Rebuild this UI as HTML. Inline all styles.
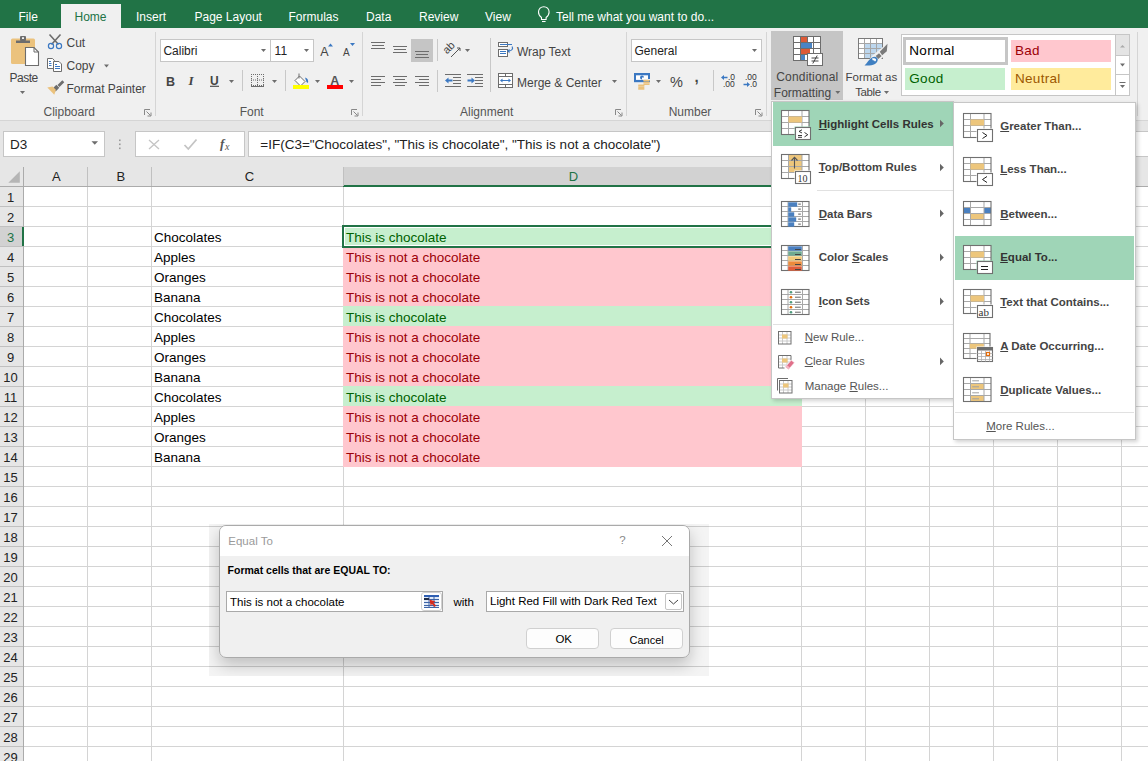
<!DOCTYPE html>
<html><head><meta charset="utf-8"><style>
html,body{margin:0;padding:0;}
body{width:1148px;height:761px;overflow:hidden;position:relative;background:#fff;font-family:"Liberation Sans",sans-serif;}
.t{position:absolute;white-space:nowrap;}
.r{position:absolute;}
</style></head><body>
<div class="r" style="left:0px;top:0px;width:1148px;height:28px;background:#217346;"></div>
<div class="r" style="left:61px;top:4px;width:60px;height:24px;background:#f0f0f0;"></div>
<div class="t" style="left:18.5px;top:10.84px;font-size:12px;line-height:12px;color:#fff;font-weight:normal;font-family:'Liberation Sans',sans-serif;">File</div>
<div class="t" style="left:74.5px;top:10.84px;font-size:12px;line-height:12px;color:#217346;font-weight:normal;font-family:'Liberation Sans',sans-serif;">Home</div>
<div class="t" style="left:136px;top:10.84px;font-size:12px;line-height:12px;color:#fff;font-weight:normal;font-family:'Liberation Sans',sans-serif;">Insert</div>
<div class="t" style="left:194.5px;top:10.84px;font-size:12px;line-height:12px;color:#fff;font-weight:normal;font-family:'Liberation Sans',sans-serif;">Page Layout</div>
<div class="t" style="left:288.5px;top:10.84px;font-size:12px;line-height:12px;color:#fff;font-weight:normal;font-family:'Liberation Sans',sans-serif;">Formulas</div>
<div class="t" style="left:366px;top:10.84px;font-size:12px;line-height:12px;color:#fff;font-weight:normal;font-family:'Liberation Sans',sans-serif;">Data</div>
<div class="t" style="left:419px;top:10.84px;font-size:12px;line-height:12px;color:#fff;font-weight:normal;font-family:'Liberation Sans',sans-serif;">Review</div>
<div class="t" style="left:485px;top:10.84px;font-size:12px;line-height:12px;color:#fff;font-weight:normal;font-family:'Liberation Sans',sans-serif;">View</div>
<div class="t" style="left:556px;top:10.84px;font-size:12px;line-height:12px;color:#fff;font-weight:normal;font-family:'Liberation Sans',sans-serif;">Tell me what you want to do...</div>
<div class="r" style="left:0px;top:28px;width:1148px;height:92px;background:#f0f0f0;"></div>
<div class="r" style="left:0px;top:120px;width:1148px;height:1px;background:#d5d5d5;"></div>
<div class="r" style="left:0px;top:121px;width:1148px;height:46px;background:#e6e6e6;"></div>
<div class="r" style="left:771px;top:31px;width:72px;height:69px;background:#c5c5c5;"></div>
<div class="t" style="left:9.5px;top:71.54px;font-size:12px;line-height:12px;color:#444;font-weight:normal;font-family:'Liberation Sans',sans-serif;letter-spacing:-0.5px">Paste</div>
<div class="t" style="left:66.5px;top:37.34px;font-size:12px;line-height:12px;color:#444;font-weight:normal;font-family:'Liberation Sans',sans-serif;">Cut</div>
<div class="t" style="left:66.5px;top:60.04px;font-size:12px;line-height:12px;color:#444;font-weight:normal;font-family:'Liberation Sans',sans-serif;">Copy</div>
<div class="t" style="left:66.5px;top:83.34px;font-size:12px;line-height:12px;color:#444;font-weight:normal;font-family:'Liberation Sans',sans-serif;">Format Painter</div>
<div class="t" style="left:43.5px;top:106.04px;font-size:12px;line-height:12px;color:#555;font-weight:normal;font-family:'Liberation Sans',sans-serif;">Clipboard</div>
<div class="t" style="left:239.7px;top:106.34px;font-size:12px;line-height:12px;color:#555;font-weight:normal;font-family:'Liberation Sans',sans-serif;">Font</div>
<div class="t" style="left:460px;top:106.14px;font-size:12px;line-height:12px;color:#555;font-weight:normal;font-family:'Liberation Sans',sans-serif;">Alignment</div>
<div class="t" style="left:668.7px;top:106.34px;font-size:12px;line-height:12px;color:#555;font-weight:normal;font-family:'Liberation Sans',sans-serif;">Number</div>
<div class="t" style="left:517px;top:45.54px;font-size:12px;line-height:12px;color:#444;font-weight:normal;font-family:'Liberation Sans',sans-serif;">Wrap Text</div>
<div class="t" style="left:517px;top:76.54px;font-size:12px;line-height:12px;color:#444;font-weight:normal;font-family:'Liberation Sans',sans-serif;">Merge &amp; Center</div>
<div class="t" style="left:776.2px;top:71.24px;font-size:12px;line-height:12px;color:#444;font-weight:normal;font-family:'Liberation Sans',sans-serif;letter-spacing:0.2px">Conditional</div>
<div class="t" style="left:773.8px;top:86.84px;font-size:12px;line-height:12px;color:#444;font-weight:normal;font-family:'Liberation Sans',sans-serif;">Formatting</div>
<div class="t" style="left:845.5px;top:71.67px;font-size:11.5px;line-height:11.5px;color:#444;font-weight:normal;font-family:'Liberation Sans',sans-serif;">Format as</div>
<div class="t" style="left:855.2px;top:87.27px;font-size:11.5px;line-height:11.5px;color:#444;font-weight:normal;font-family:'Liberation Sans',sans-serif;letter-spacing:-0.4px">Table</div>
<div class="r" style="left:155px;top:32px;width:1px;height:84px;background:#d5d5d5;"></div>
<div class="r" style="left:362px;top:32px;width:1px;height:84px;background:#d5d5d5;"></div>
<div class="r" style="left:626px;top:32px;width:1px;height:84px;background:#d5d5d5;"></div>
<div class="r" style="left:766px;top:32px;width:1px;height:84px;background:#d5d5d5;"></div>
<div class="r" style="left:1137px;top:32px;width:1px;height:84px;background:#d5d5d5;"></div>
<div class="r" style="left:160px;top:39px;width:111px;height:23px;background:#fff;border:1px solid #c6c6c6;box-sizing:border-box"></div>
<div class="r" style="left:270px;top:39px;width:44px;height:23px;background:#fff;border:1px solid #c6c6c6;box-sizing:border-box"></div>
<div class="t" style="left:163.4px;top:44.64px;font-size:12px;line-height:12px;color:#222;font-weight:normal;font-family:'Liberation Sans',sans-serif;">Calibri</div>
<div class="t" style="left:274.6px;top:44.64px;font-size:12px;line-height:12px;color:#222;font-weight:normal;font-family:'Liberation Sans',sans-serif;">11</div>
<div class="r" style="left:631px;top:39px;width:131px;height:23px;background:#fff;border:1px solid #c6c6c6;box-sizing:border-box"></div>
<div class="t" style="left:634.5px;top:44.64px;font-size:12px;line-height:12px;color:#222;font-weight:normal;font-family:'Liberation Sans',sans-serif;">General</div>
<div class="r" style="left:901px;top:34px;width:229px;height:62px;background:#fff;border:1px solid #c6c6c6;box-sizing:border-box"></div>
<div class="r" style="left:903px;top:37px;width:105px;height:28px;background:#fff;border:3px solid #c6c6c6;box-sizing:border-box"></div>
<div class="r" style="left:1011px;top:40px;width:100px;height:22px;background:#ffc7ce;"></div>
<div class="r" style="left:905px;top:68px;width:100px;height:22px;background:#c6efce;"></div>
<div class="r" style="left:1011px;top:68px;width:100px;height:22px;background:#ffeb9c;"></div>
<div class="t" style="left:909.3px;top:44.17px;font-size:13.5px;line-height:13.5px;color:#000;font-weight:normal;font-family:'Liberation Sans',sans-serif;letter-spacing:0.3px">Normal</div>
<div class="t" style="left:1015px;top:44.17px;font-size:13.5px;line-height:13.5px;color:#9c0006;font-weight:normal;font-family:'Liberation Sans',sans-serif;letter-spacing:0.3px">Bad</div>
<div class="t" style="left:909.3px;top:71.97px;font-size:13.5px;line-height:13.5px;color:#006100;font-weight:normal;font-family:'Liberation Sans',sans-serif;letter-spacing:0.3px">Good</div>
<div class="t" style="left:1015px;top:71.97px;font-size:13.5px;line-height:13.5px;color:#9c5700;font-weight:normal;font-family:'Liberation Sans',sans-serif;letter-spacing:0.3px">Neutral</div>
<div class="r" style="left:1115px;top:34px;width:15px;height:62px;background:#fff;border:1px solid #c6c6c6;box-sizing:border-box"></div>
<div class="r" style="left:1116px;top:35px;width:13px;height:20px;background:#e4e4e4;"></div>
<div class="r" style="left:1116px;top:55px;width:13px;height:1px;background:#c6c6c6;"></div>
<div class="r" style="left:1116px;top:74px;width:13px;height:1px;background:#c6c6c6;"></div>
<svg class="r" style="left:0;top:0" width="1148" height="120" viewBox="0 0 1148 120"><rect x="11" y="38.5" width="24" height="25.5" rx="1.5" fill="#ebc27d"/><path d="M16 40.5h14v2.5h-14z" fill="#6d6d6d"/><rect x="20" y="36" width="6" height="5" rx="1" fill="#6d6d6d"/><rect x="22" y="37.3" width="2" height="1.6" fill="#fff"/><path d="M25.5 47.5h8.5l4.5 4.5v13.5h-13z" fill="#fff" stroke="#6d6d6d" stroke-width="1.1"/><path d="M34 47.5v4.5h4.5" fill="none" stroke="#6d6d6d" stroke-width="1"/><path d="M20.0 91.0h5l-2.5 3z" fill="#6d6d6d"/><path d="M49.5 34.5l9 10M60.5 34.5l-9 10" stroke="#6d6d6d" stroke-width="1.6"/><circle cx="51" cy="46" r="2.6" fill="none" stroke="#3b78c2" stroke-width="1.2"/><circle cx="59" cy="46" r="2.6" fill="none" stroke="#3b78c2" stroke-width="1.2"/><path d="M47.5 58.5h5l1.8 1.8v8.2h-6.8z" fill="#fff" stroke="#6d6d6d" stroke-width="1"/><path d="M49 61.5h2M49 63.5h2.5M49 65.5h2.5" stroke="#3b78c2" stroke-width="1"/><path d="M53.5 61.5h5.5l2.5 2.5v7.5h-8z" fill="#fff" stroke="#6d6d6d" stroke-width="1"/><path d="M55 64.5h2M55 66.5h5M55 68.5h5" stroke="#3b78c2" stroke-width="1"/><path d="M104.0 64.5h5l-2.5 3z" fill="#6d6d6d"/><path d="M62.3 82.3l-2.8 2.8" stroke="#6d6d6d" stroke-width="2.8" stroke-linecap="square"/><path d="M57.8 86.3l-3.6 3.6" stroke="#6d6d6d" stroke-width="4.2"/><path d="M47.3 87.6l5.2-1.2 3.4 3.4-1.6 4.9z" fill="#ebc27d"/><path d="M144.5 115v-5.5h5.5" fill="none" stroke="#888" stroke-width="1"/><path d="M146.5 111.5l4 4M151 112.5v3.5h-3.5" fill="none" stroke="#888" stroke-width="1"/><path d="M351.5 115v-5.5h5.5" fill="none" stroke="#888" stroke-width="1"/><path d="M353.5 111.5l4 4M358 112.5v3.5h-3.5" fill="none" stroke="#888" stroke-width="1"/><path d="M615.5 115v-5.5h5.5" fill="none" stroke="#888" stroke-width="1"/><path d="M617.5 111.5l4 4M622 112.5v3.5h-3.5" fill="none" stroke="#888" stroke-width="1"/><path d="M755.5 115v-5.5h5.5" fill="none" stroke="#888" stroke-width="1"/><path d="M757.5 111.5l4 4M762 112.5v3.5h-3.5" fill="none" stroke="#888" stroke-width="1"/><path d="M261.0 49.0h5l-2.5 3z" fill="#6d6d6d"/><path d="M304.0 49.0h5l-2.5 3z" fill="#6d6d6d"/><text x="320.3" y="56" font-family="Liberation Sans" font-size="12.5" fill="#444">A</text><path d="M328 46.5l2.5-3 2.5 3z" fill="#3b78c2"/><text x="343" y="56" font-family="Liberation Sans" font-size="10" fill="#444">A</text><path d="M350 43h5l-2.5 3z" fill="#3b78c2"/><text x="166" y="85.5" font-family="Liberation Sans" font-weight="bold" font-size="12.5" fill="#444">B</text><text x="188.5" y="85.3" font-family="Liberation Serif" font-style="italic" font-weight="bold" font-size="13" fill="#444">I</text><text x="210" y="84.5" font-family="Liberation Sans" font-weight="bold" font-size="12" fill="#444">U</text><path d="M210 86.3h9" stroke="#444" stroke-width="1.1"/><path d="M229.0 80.0h5l-2.5 3z" fill="#6d6d6d"/><rect x="242" y="70" width="1" height="21" fill="#c8c8c8"/><rect x="285" y="70" width="1" height="21" fill="#c8c8c8"/><rect x="251" y="74" width="1" height="1" fill="#6d6d6d"/><rect x="253" y="74" width="1" height="1" fill="#6d6d6d"/><rect x="255" y="74" width="1" height="1" fill="#6d6d6d"/><rect x="257" y="74" width="1" height="1" fill="#6d6d6d"/><rect x="259" y="74" width="1" height="1" fill="#6d6d6d"/><rect x="261" y="74" width="1" height="1" fill="#6d6d6d"/><rect x="263" y="74" width="1" height="1" fill="#6d6d6d"/><rect x="251" y="79.5" width="1" height="1" fill="#6d6d6d"/><rect x="253" y="79.5" width="1" height="1" fill="#6d6d6d"/><rect x="255" y="79.5" width="1" height="1" fill="#6d6d6d"/><rect x="257" y="79.5" width="1" height="1" fill="#6d6d6d"/><rect x="259" y="79.5" width="1" height="1" fill="#6d6d6d"/><rect x="261" y="79.5" width="1" height="1" fill="#6d6d6d"/><rect x="263" y="79.5" width="1" height="1" fill="#6d6d6d"/><rect x="251" y="85" width="1" height="1" fill="#6d6d6d"/><rect x="253" y="85" width="1" height="1" fill="#6d6d6d"/><rect x="255" y="85" width="1" height="1" fill="#6d6d6d"/><rect x="257" y="85" width="1" height="1" fill="#6d6d6d"/><rect x="259" y="85" width="1" height="1" fill="#6d6d6d"/><rect x="261" y="85" width="1" height="1" fill="#6d6d6d"/><rect x="263" y="85" width="1" height="1" fill="#6d6d6d"/><rect x="251" y="74" width="1" height="1" fill="#6d6d6d"/><rect x="251" y="76" width="1" height="1" fill="#6d6d6d"/><rect x="251" y="78" width="1" height="1" fill="#6d6d6d"/><rect x="251" y="80" width="1" height="1" fill="#6d6d6d"/><rect x="251" y="82" width="1" height="1" fill="#6d6d6d"/><rect x="251" y="84" width="1" height="1" fill="#6d6d6d"/><rect x="257" y="74" width="1" height="1" fill="#6d6d6d"/><rect x="257" y="76" width="1" height="1" fill="#6d6d6d"/><rect x="257" y="78" width="1" height="1" fill="#6d6d6d"/><rect x="257" y="80" width="1" height="1" fill="#6d6d6d"/><rect x="257" y="82" width="1" height="1" fill="#6d6d6d"/><rect x="257" y="84" width="1" height="1" fill="#6d6d6d"/><rect x="263" y="74" width="1" height="1" fill="#6d6d6d"/><rect x="263" y="76" width="1" height="1" fill="#6d6d6d"/><rect x="263" y="78" width="1" height="1" fill="#6d6d6d"/><rect x="263" y="80" width="1" height="1" fill="#6d6d6d"/><rect x="263" y="82" width="1" height="1" fill="#6d6d6d"/><rect x="263" y="84" width="1" height="1" fill="#6d6d6d"/><rect x="251" y="86" width="13" height="1" fill="#6d6d6d"/><path d="M272.0 80.0h5l-2.5 3z" fill="#6d6d6d"/><path d="M299.5 76l5.5 5.5-4.5 4.5-5.5-5.5z" fill="#fff" stroke="#6d6d6d" stroke-width="1"/><path d="M299 73.5v5" stroke="#6d6d6d" stroke-width="1"/><path d="M305 77.5c2.5 .5 3.5 2.5 3 5.5l-1.5-1z" fill="#3b78c2"/><rect x="293" y="85" width="16" height="4" fill="#ffff00"/><path d="M315.0 80.0h5l-2.5 3z" fill="#6d6d6d"/><text x="330.3" y="84.8" font-family="Liberation Sans" font-weight="bold" font-size="12.5" fill="#555">A</text><rect x="327" y="85" width="16" height="4" fill="#ff0000"/><path d="M349.0 80.0h5l-2.5 3z" fill="#6d6d6d"/><rect x="371" y="42" width="14" height="1" fill="#6d6d6d"/><rect x="372" y="45" width="12" height="1" fill="#6d6d6d"/><rect x="371" y="48" width="14" height="1" fill="#6d6d6d"/><rect x="393" y="46" width="14" height="1" fill="#6d6d6d"/><rect x="394" y="49" width="12" height="1" fill="#6d6d6d"/><rect x="393" y="52" width="14" height="1" fill="#6d6d6d"/><rect x="411" y="39" width="22" height="23" fill="#c5c5c5"/><rect x="415" y="51" width="14" height="1" fill="#6d6d6d"/><rect x="416" y="54" width="12" height="1" fill="#6d6d6d"/><rect x="415" y="57" width="14" height="1" fill="#6d6d6d"/><rect x="437" y="39" width="1" height="22" fill="#c8c8c8"/><rect x="437" y="70" width="1" height="22" fill="#c8c8c8"/><rect x="490" y="38" width="1" height="54" fill="#c8c8c8"/><rect x="371" y="76" width="14" height="1" fill="#6d6d6d"/><rect x="393" y="76" width="14" height="1" fill="#6d6d6d"/><rect x="415" y="76" width="14" height="1" fill="#6d6d6d"/><rect x="371" y="79" width="10" height="1" fill="#6d6d6d"/><rect x="395" y="79" width="10" height="1" fill="#6d6d6d"/><rect x="419" y="79" width="10" height="1" fill="#6d6d6d"/><rect x="371" y="82" width="14" height="1" fill="#6d6d6d"/><rect x="393" y="82" width="14" height="1" fill="#6d6d6d"/><rect x="415" y="82" width="14" height="1" fill="#6d6d6d"/><rect x="371" y="85" width="10" height="1" fill="#6d6d6d"/><rect x="395" y="85" width="10" height="1" fill="#6d6d6d"/><rect x="419" y="85" width="10" height="1" fill="#6d6d6d"/><text x="0" y="0" transform="translate(447 54.5) rotate(-45)" font-family="Liberation Sans" font-size="11" fill="#444">ab</text><path d="M451 57l9-9M457 48h3v3" stroke="#555" stroke-width="1" fill="none"/><path d="M465.0 49.0h5l-2.5 3z" fill="#6d6d6d"/><rect x="445" y="74" width="16" height="1" fill="#6d6d6d"/><rect x="445" y="86" width="16" height="1" fill="#6d6d6d"/><rect x="453" y="77" width="8" height="1" fill="#6d6d6d"/><rect x="453" y="80" width="8" height="1" fill="#6d6d6d"/><rect x="453" y="83" width="8" height="1" fill="#6d6d6d"/><path d="M445 80.5l3.5-3v2h4v2h-4v2z" fill="#3b78c2"/><rect x="467" y="74" width="16" height="1" fill="#6d6d6d"/><rect x="467" y="86" width="16" height="1" fill="#6d6d6d"/><rect x="475" y="77" width="8" height="1" fill="#6d6d6d"/><rect x="475" y="80" width="8" height="1" fill="#6d6d6d"/><rect x="475" y="83" width="8" height="1" fill="#6d6d6d"/><path d="M475 80.5l-3.5-3v2h-4v2h4v2z" fill="#3b78c2"/><rect x="498.5" y="42.5" width="9" height="4" fill="#fff" stroke="#6d6d6d" stroke-width="1"/><path d="M500 44.5h12" stroke="#3b78c2" stroke-width="1"/><rect x="498.5" y="49.5" width="9" height="7" fill="#fff" stroke="#6d6d6d" stroke-width="1"/><path d="M500 51.5h6M500 53.5h6" stroke="#3b78c2" stroke-width="1"/><path d="M512 46.5c1.5 2 0 4.5-3.5 4.5" stroke="#3b78c2" stroke-width="1.2" fill="none"/><path d="M507 51l2.5-2.3v4.6z" fill="#3b78c2"/><rect x="498.5" y="73.5" width="14" height="14" fill="#fff" stroke="#6d6d6d" stroke-width="1"/><path d="M498.5 76.5h14M498.5 84.5h14M505.5 73.5v3M505.5 84.5v3" stroke="#6d6d6d" stroke-width="1"/><path d="M501 80.5h9" stroke="#3b78c2" stroke-width="1"/><path d="M500 80.5l2.5-2v4zM511 80.5l-2.5-2v4z" fill="#3b78c2"/><path d="M612.0 80.0h5l-2.5 3z" fill="#6d6d6d"/><path d="M752.0 49.0h5l-2.5 3z" fill="#6d6d6d"/><rect x="634" y="73" width="16" height="9.2" fill="#3b78c2"/><path d="M636 75.3h12v4.6h-12z" fill="#fff"/><circle cx="642" cy="77.6" r="2" fill="#3b78c2"/><path d="M642 77.6h2v2h-2z" fill="#fff"/><path d="M643.5 79.5h6.5" stroke="#f0f0f0" stroke-width="1"/><rect x="643.2" y="79.7" width="6.6" height="1.6" rx="0.8" fill="#ebc27d"/><rect x="643.2" y="81.5" width="6.6" height="1.6" rx="0.8" fill="#ebc27d"/><rect x="643.2" y="83.3" width="6.6" height="1.6" rx="0.8" fill="#ebc27d"/><rect x="638.0" y="84.5" width="6.6" height="1.6" rx="0.8" fill="#ebc27d"/><rect x="638.0" y="86.3" width="6.6" height="1.6" rx="0.8" fill="#ebc27d"/><rect x="638.0" y="88.10000000000001" width="6.6" height="1.6" rx="0.8" fill="#ebc27d"/><path d="M656.0 80.0h5l-2.5 3z" fill="#6d6d6d"/><text x="670" y="86.8" font-family="Liberation Sans" font-size="14.5" fill="#444">%</text><text x="694.5" y="82" font-family="Liberation Sans" font-weight="bold" font-size="15" fill="#444">,</text><rect x="713" y="70" width="1" height="21" fill="#c8c8c8"/><text x="728" y="80" font-family="Liberation Sans" font-size="8.5" fill="#333">.0</text><text x="723" y="87" font-family="Liberation Sans" font-size="8.5" fill="#333">.00</text><path d="M721 77.5l3-2.5v1.8h3.5v1.5h-3.5v1.8z" fill="#3b78c2"/><text x="745" y="80" font-family="Liberation Sans" font-size="8.5" fill="#333">.00</text><text x="750" y="87" font-family="Liberation Sans" font-size="8.5" fill="#333">.0</text><path d="M750 84.5l-3-2.5v1.8h-3.5v1.5h3.5v1.8z" fill="#3b78c2"/><rect x="793" y="36" width="28" height="25" fill="#6d6d6d"/><rect x="794" y="37" width="6" height="5" fill="#fff"/><rect x="794" y="43" width="6" height="5" fill="#fff"/><rect x="794" y="49" width="6" height="5" fill="#fff"/><rect x="794" y="55" width="6" height="5" fill="#fff"/><rect x="801" y="37" width="6" height="5" fill="#fff"/><rect x="801" y="43" width="6" height="5" fill="#fff"/><rect x="801" y="49" width="6" height="5" fill="#fff"/><rect x="801" y="55" width="6" height="5" fill="#fff"/><rect x="808" y="37" width="5" height="5" fill="#fff"/><rect x="808" y="43" width="5" height="5" fill="#fff"/><rect x="808" y="49" width="5" height="5" fill="#fff"/><rect x="808" y="55" width="5" height="5" fill="#fff"/><rect x="814" y="37" width="6" height="5" fill="#fff"/><rect x="814" y="43" width="6" height="5" fill="#fff"/><rect x="814" y="49" width="6" height="5" fill="#fff"/><rect x="814" y="55" width="6" height="5" fill="#fff"/><rect x="801" y="37" width="6" height="5" fill="#dd5a37"/><rect x="801" y="43" width="11" height="5" fill="#4a84c4"/><rect x="801" y="49" width="9" height="5" fill="#dd5a37"/><rect x="801" y="55" width="4" height="5" fill="#4a84c4"/><rect x="807.5" y="53.5" width="15" height="12" fill="#fff" stroke="#6d6d6d" stroke-width="1"/><path d="M811.5 58h7M811.5 61h7M817.2 55.5l-4.4 8" stroke="#333" stroke-width="0.9"/><rect x="858" y="38" width="25" height="21" fill="#f0f0f0"/><rect x="858.5" y="38.5" width="6" height="5" fill="#fff"/><rect x="858.5" y="43.5" width="6" height="5" fill="#fff"/><rect x="858.5" y="48.5" width="6" height="5" fill="#fff"/><rect x="858.5" y="53.5" width="6" height="5" fill="#fff"/><rect x="864.5" y="38.5" width="6" height="5" fill="#fff"/><rect x="864.5" y="43.5" width="6" height="5" fill="#bdd7ee"/><rect x="864.5" y="48.5" width="6" height="5" fill="#bdd7ee"/><rect x="864.5" y="53.5" width="6" height="5" fill="#bdd7ee"/><rect x="870.5" y="38.5" width="6" height="5" fill="#fff"/><rect x="870.5" y="43.5" width="6" height="5" fill="#bdd7ee"/><rect x="870.5" y="48.5" width="6" height="5" fill="#bdd7ee"/><rect x="870.5" y="53.5" width="6" height="5" fill="#bdd7ee"/><rect x="876.5" y="38.5" width="6" height="5" fill="#fff"/><rect x="876.5" y="43.5" width="6" height="5" fill="#bdd7ee"/><rect x="876.5" y="48.5" width="6" height="5" fill="#bdd7ee"/><rect x="876.5" y="53.5" width="6" height="5" fill="#bdd7ee"/><path d="M864.5 38.5v20M870.5 38.5v20M876.5 38.5v20M858.5 43.5h24M858.5 48.5h24M858.5 53.5h24" stroke="#a6a6a6" stroke-width="1"/><rect x="858.5" y="38.5" width="24" height="20" fill="none" stroke="#7a7a7a" stroke-width="1"/><path d="M889 42l-.5 10-8 7.5-12 8-4-2 8-10z" fill="#f0f0f0"/><path d="M887.5 43.7l-.7 7.5-4.6 4-2.4-3.4z" fill="#7a7a7a"/><path d="M879 53.2l2.6 2.7-3.3 3-2.6-2.9z" fill="#7a7a7a"/><path d="M864.5 65.6c2.5-3 5-6.5 7.5-8.2 2.5-1.6 5.8-.5 5.8 2.2 0 2.5-2 4.4-4.6 5.2-2.2.7-5.5.8-8.7.8z" fill="#3f7fc1"/><path d="M872 58.6c1.3-.6 3.2-.4 3.9.6.5.9-.3 2.3-1 2.3-.5-1-1.4-1.2-2.2-1.2z" fill="#fff"/><path d="M541.5 17.5c-2-1.5-3-3.3-3-5.5 0-3 2.4-5.3 5.3-5.3s5.3 2.3 5.3 5.3c0 2.2-1 4-3 5.5v2h-4.6z" fill="none" stroke="#fff" stroke-width="1.1"/><path d="M542 21.5h3.6" stroke="#fff" stroke-width="1.1"/><path d="M835.3 91.0h5l-2.5 3z" fill="#6d6d6d"/><path d="M884.0 91.0h5l-2.5 3z" fill="#6d6d6d"/><path d="M1120 47.5l2.5-2.5 2.5 2.5z" fill="#aaa"/><path d="M1120.0 63.5h5l-2.5 3z" fill="#6d6d6d"/><path d="M1119.5 82.5h6" stroke="#6d6d6d" stroke-width="1"/><path d="M1120.0 85.0h5l-2.5 3z" fill="#6d6d6d"/></svg>
<div class="r" style="left:3px;top:131px;width:102px;height:26px;background:#fff;border:1px solid #c6c6c6;box-sizing:border-box"></div>
<div class="t" style="left:10px;top:137.57px;font-size:13.5px;line-height:13.5px;color:#222;font-weight:normal;font-family:'Liberation Sans',sans-serif;">D3</div>
<div class="r" style="left:135px;top:131px;width:110px;height:26px;background:#fff;border:1px solid #c6c6c6;box-sizing:border-box"></div>
<div class="r" style="left:248px;top:131px;width:910px;height:26px;background:#fff;border:1px solid #c6c6c6;box-sizing:border-box"></div>
<svg class="r" style="left:0;top:120px" width="260" height="67" viewBox="0 120 260 67"><path d="M91.5 141.3h6.5l-3.25 3.4z" fill="#6d6d6d"/><rect x="119" y="139.5" width="1.6" height="1.6" fill="#9a9a9a"/><rect x="119" y="143.5" width="1.6" height="1.6" fill="#9a9a9a"/><rect x="119" y="147.5" width="1.6" height="1.6" fill="#9a9a9a"/><path d="M149 140l10 9M159 140l-10 9" stroke="#c4c4c4" stroke-width="1.3"/><path d="M184.5 145l3.8 4 8.2-9.5" stroke="#c4c4c4" stroke-width="1.8" fill="none"/><text x="220" y="148" font-family="Liberation Serif" font-style="italic" font-weight="bold" font-size="13" fill="#555">f</text><text x="225" y="149.5" font-family="Liberation Serif" font-style="italic" font-size="10" fill="#555">x</text></svg>
<div class="t" style="left:260.3px;top:137.57px;font-size:13.5px;line-height:13.5px;color:#222;font-weight:normal;font-family:'Liberation Sans',sans-serif;">=IF(C3="Chocolates", "This is chocolate", "This is not a chocolate")</div>
<div class="r" style="left:0px;top:167px;width:1148px;height:20px;background:#e6e6e6;"></div>
<div class="r" style="left:343px;top:167px;width:459px;height:18px;background:#d2d2d2;"></div>
<div class="r" style="left:343px;top:185px;width:459px;height:2px;background:#217346;"></div>
<div class="r" style="left:0px;top:186px;width:343px;height:1px;background:#ababab;"></div>
<div class="r" style="left:802px;top:186px;width:346px;height:1px;background:#ababab;"></div>
<div class="r" style="left:24px;top:187px;width:1124px;height:574px;background:#fff;"></div>
<div class="r" style="left:0px;top:187px;width:23px;height:574px;background:#e6e6e6;"></div>
<div class="r" style="left:0px;top:227px;width:23px;height:19px;background:#d2d2d2;"></div>
<div class="r" style="left:23px;top:167px;width:1px;height:594px;background:#ababab;"></div>
<div class="r" style="left:24px;top:206px;width:1124px;height:1px;background:#d4d4d4;"></div>
<div class="r" style="left:0px;top:206px;width:23px;height:1px;background:#c0c0c0;"></div>
<div class="r" style="left:24px;top:226px;width:1124px;height:1px;background:#d4d4d4;"></div>
<div class="r" style="left:0px;top:226px;width:23px;height:1px;background:#c0c0c0;"></div>
<div class="r" style="left:24px;top:246px;width:1124px;height:1px;background:#d4d4d4;"></div>
<div class="r" style="left:0px;top:246px;width:23px;height:1px;background:#c0c0c0;"></div>
<div class="r" style="left:24px;top:266px;width:1124px;height:1px;background:#d4d4d4;"></div>
<div class="r" style="left:0px;top:266px;width:23px;height:1px;background:#c0c0c0;"></div>
<div class="r" style="left:24px;top:286px;width:1124px;height:1px;background:#d4d4d4;"></div>
<div class="r" style="left:0px;top:286px;width:23px;height:1px;background:#c0c0c0;"></div>
<div class="r" style="left:24px;top:306px;width:1124px;height:1px;background:#d4d4d4;"></div>
<div class="r" style="left:0px;top:306px;width:23px;height:1px;background:#c0c0c0;"></div>
<div class="r" style="left:24px;top:326px;width:1124px;height:1px;background:#d4d4d4;"></div>
<div class="r" style="left:0px;top:326px;width:23px;height:1px;background:#c0c0c0;"></div>
<div class="r" style="left:24px;top:346px;width:1124px;height:1px;background:#d4d4d4;"></div>
<div class="r" style="left:0px;top:346px;width:23px;height:1px;background:#c0c0c0;"></div>
<div class="r" style="left:24px;top:366px;width:1124px;height:1px;background:#d4d4d4;"></div>
<div class="r" style="left:0px;top:366px;width:23px;height:1px;background:#c0c0c0;"></div>
<div class="r" style="left:24px;top:386px;width:1124px;height:1px;background:#d4d4d4;"></div>
<div class="r" style="left:0px;top:386px;width:23px;height:1px;background:#c0c0c0;"></div>
<div class="r" style="left:24px;top:406px;width:1124px;height:1px;background:#d4d4d4;"></div>
<div class="r" style="left:0px;top:406px;width:23px;height:1px;background:#c0c0c0;"></div>
<div class="r" style="left:24px;top:426px;width:1124px;height:1px;background:#d4d4d4;"></div>
<div class="r" style="left:0px;top:426px;width:23px;height:1px;background:#c0c0c0;"></div>
<div class="r" style="left:24px;top:446px;width:1124px;height:1px;background:#d4d4d4;"></div>
<div class="r" style="left:0px;top:446px;width:23px;height:1px;background:#c0c0c0;"></div>
<div class="r" style="left:24px;top:466px;width:1124px;height:1px;background:#d4d4d4;"></div>
<div class="r" style="left:0px;top:466px;width:23px;height:1px;background:#c0c0c0;"></div>
<div class="r" style="left:24px;top:486px;width:1124px;height:1px;background:#d4d4d4;"></div>
<div class="r" style="left:0px;top:486px;width:23px;height:1px;background:#c0c0c0;"></div>
<div class="r" style="left:24px;top:506px;width:1124px;height:1px;background:#d4d4d4;"></div>
<div class="r" style="left:0px;top:506px;width:23px;height:1px;background:#c0c0c0;"></div>
<div class="r" style="left:24px;top:526px;width:1124px;height:1px;background:#d4d4d4;"></div>
<div class="r" style="left:0px;top:526px;width:23px;height:1px;background:#c0c0c0;"></div>
<div class="r" style="left:24px;top:546px;width:1124px;height:1px;background:#d4d4d4;"></div>
<div class="r" style="left:0px;top:546px;width:23px;height:1px;background:#c0c0c0;"></div>
<div class="r" style="left:24px;top:566px;width:1124px;height:1px;background:#d4d4d4;"></div>
<div class="r" style="left:0px;top:566px;width:23px;height:1px;background:#c0c0c0;"></div>
<div class="r" style="left:24px;top:586px;width:1124px;height:1px;background:#d4d4d4;"></div>
<div class="r" style="left:0px;top:586px;width:23px;height:1px;background:#c0c0c0;"></div>
<div class="r" style="left:24px;top:606px;width:1124px;height:1px;background:#d4d4d4;"></div>
<div class="r" style="left:0px;top:606px;width:23px;height:1px;background:#c0c0c0;"></div>
<div class="r" style="left:24px;top:626px;width:1124px;height:1px;background:#d4d4d4;"></div>
<div class="r" style="left:0px;top:626px;width:23px;height:1px;background:#c0c0c0;"></div>
<div class="r" style="left:24px;top:646px;width:1124px;height:1px;background:#d4d4d4;"></div>
<div class="r" style="left:0px;top:646px;width:23px;height:1px;background:#c0c0c0;"></div>
<div class="r" style="left:24px;top:666px;width:1124px;height:1px;background:#d4d4d4;"></div>
<div class="r" style="left:0px;top:666px;width:23px;height:1px;background:#c0c0c0;"></div>
<div class="r" style="left:24px;top:686px;width:1124px;height:1px;background:#d4d4d4;"></div>
<div class="r" style="left:0px;top:686px;width:23px;height:1px;background:#c0c0c0;"></div>
<div class="r" style="left:24px;top:706px;width:1124px;height:1px;background:#d4d4d4;"></div>
<div class="r" style="left:0px;top:706px;width:23px;height:1px;background:#c0c0c0;"></div>
<div class="r" style="left:24px;top:726px;width:1124px;height:1px;background:#d4d4d4;"></div>
<div class="r" style="left:0px;top:726px;width:23px;height:1px;background:#c0c0c0;"></div>
<div class="r" style="left:24px;top:746px;width:1124px;height:1px;background:#d4d4d4;"></div>
<div class="r" style="left:0px;top:746px;width:23px;height:1px;background:#c0c0c0;"></div>
<div class="r" style="left:24px;top:766px;width:1124px;height:1px;background:#d4d4d4;"></div>
<div class="r" style="left:0px;top:766px;width:23px;height:1px;background:#c0c0c0;"></div>
<div class="r" style="left:87px;top:187px;width:1px;height:574px;background:#d4d4d4;"></div>
<div class="r" style="left:151px;top:187px;width:1px;height:574px;background:#d4d4d4;"></div>
<div class="r" style="left:343px;top:187px;width:1px;height:574px;background:#d4d4d4;"></div>
<div class="r" style="left:801px;top:187px;width:1px;height:574px;background:#d4d4d4;"></div>
<div class="r" style="left:865px;top:187px;width:1px;height:574px;background:#d4d4d4;"></div>
<div class="r" style="left:929px;top:187px;width:1px;height:574px;background:#d4d4d4;"></div>
<div class="r" style="left:993px;top:187px;width:1px;height:574px;background:#d4d4d4;"></div>
<div class="r" style="left:1057px;top:187px;width:1px;height:574px;background:#d4d4d4;"></div>
<div class="r" style="left:1121px;top:187px;width:1px;height:574px;background:#d4d4d4;"></div>
<div class="r" style="left:87px;top:167px;width:1px;height:19px;background:#c0c0c0;"></div>
<div class="r" style="left:151px;top:167px;width:1px;height:19px;background:#c0c0c0;"></div>
<div class="r" style="left:343px;top:167px;width:1px;height:19px;background:#c0c0c0;"></div>
<div class="r" style="left:801px;top:167px;width:1px;height:19px;background:#c0c0c0;"></div>
<div class="r" style="left:865px;top:167px;width:1px;height:19px;background:#c0c0c0;"></div>
<div class="r" style="left:929px;top:167px;width:1px;height:19px;background:#c0c0c0;"></div>
<div class="r" style="left:993px;top:167px;width:1px;height:19px;background:#c0c0c0;"></div>
<div class="r" style="left:1057px;top:167px;width:1px;height:19px;background:#c0c0c0;"></div>
<div class="r" style="left:1121px;top:167px;width:1px;height:19px;background:#c0c0c0;"></div>
<div class="r" style="left:343px;top:226px;width:459px;height:21px;background:#c6efce;"></div>
<div class="r" style="left:343px;top:246px;width:459px;height:21px;background:#ffc7ce;"></div>
<div class="r" style="left:343px;top:266px;width:459px;height:21px;background:#ffc7ce;"></div>
<div class="r" style="left:343px;top:286px;width:459px;height:21px;background:#ffc7ce;"></div>
<div class="r" style="left:343px;top:306px;width:459px;height:21px;background:#c6efce;"></div>
<div class="r" style="left:343px;top:326px;width:459px;height:21px;background:#ffc7ce;"></div>
<div class="r" style="left:343px;top:346px;width:459px;height:21px;background:#ffc7ce;"></div>
<div class="r" style="left:343px;top:366px;width:459px;height:21px;background:#ffc7ce;"></div>
<div class="r" style="left:343px;top:386px;width:459px;height:21px;background:#c6efce;"></div>
<div class="r" style="left:343px;top:406px;width:459px;height:21px;background:#ffc7ce;"></div>
<div class="r" style="left:343px;top:426px;width:459px;height:21px;background:#ffc7ce;"></div>
<div class="r" style="left:343px;top:446px;width:459px;height:21px;background:#ffc7ce;"></div>
<svg class="r" style="left:0;top:167px" width="23" height="19" viewBox="0 167 23 19"><path d="M8.3 182.7h11.5v-11.5z" fill="#b5b5b5"/></svg>
<div class="r" style="left:22px;top:227px;width:2px;height:19px;background:#217346;"></div>
<div class="t" style="left:52px;top:170.00px;font-size:13px;line-height:13px;color:#222;font-weight:normal;font-family:'Liberation Sans',sans-serif;">A</div>
<div class="t" style="left:116.5px;top:170.00px;font-size:13px;line-height:13px;color:#222;font-weight:normal;font-family:'Liberation Sans',sans-serif;">B</div>
<div class="t" style="left:244.7px;top:170.00px;font-size:13px;line-height:13px;color:#222;font-weight:normal;font-family:'Liberation Sans',sans-serif;">C</div>
<div class="t" style="left:568.7px;top:170.00px;font-size:13px;line-height:13px;color:#217346;font-weight:normal;font-family:'Liberation Sans',sans-serif;">D</div>
<div class="t" style="left:0px;top:190.50px;font-size:13px;line-height:13px;color:#222;font-weight:normal;font-family:'Liberation Sans',sans-serif;width:21px;text-align:center">1</div>
<div class="t" style="left:0px;top:210.50px;font-size:13px;line-height:13px;color:#222;font-weight:normal;font-family:'Liberation Sans',sans-serif;width:21px;text-align:center">2</div>
<div class="t" style="left:0px;top:230.50px;font-size:13px;line-height:13px;color:#217346;font-weight:normal;font-family:'Liberation Sans',sans-serif;width:21px;text-align:center">3</div>
<div class="t" style="left:0px;top:250.50px;font-size:13px;line-height:13px;color:#222;font-weight:normal;font-family:'Liberation Sans',sans-serif;width:21px;text-align:center">4</div>
<div class="t" style="left:0px;top:270.50px;font-size:13px;line-height:13px;color:#222;font-weight:normal;font-family:'Liberation Sans',sans-serif;width:21px;text-align:center">5</div>
<div class="t" style="left:0px;top:290.50px;font-size:13px;line-height:13px;color:#222;font-weight:normal;font-family:'Liberation Sans',sans-serif;width:21px;text-align:center">6</div>
<div class="t" style="left:0px;top:310.50px;font-size:13px;line-height:13px;color:#222;font-weight:normal;font-family:'Liberation Sans',sans-serif;width:21px;text-align:center">7</div>
<div class="t" style="left:0px;top:330.50px;font-size:13px;line-height:13px;color:#222;font-weight:normal;font-family:'Liberation Sans',sans-serif;width:21px;text-align:center">8</div>
<div class="t" style="left:0px;top:350.50px;font-size:13px;line-height:13px;color:#222;font-weight:normal;font-family:'Liberation Sans',sans-serif;width:21px;text-align:center">9</div>
<div class="t" style="left:0px;top:370.50px;font-size:13px;line-height:13px;color:#222;font-weight:normal;font-family:'Liberation Sans',sans-serif;width:21px;text-align:center">10</div>
<div class="t" style="left:0px;top:390.50px;font-size:13px;line-height:13px;color:#222;font-weight:normal;font-family:'Liberation Sans',sans-serif;width:21px;text-align:center">11</div>
<div class="t" style="left:0px;top:410.50px;font-size:13px;line-height:13px;color:#222;font-weight:normal;font-family:'Liberation Sans',sans-serif;width:21px;text-align:center">12</div>
<div class="t" style="left:0px;top:430.50px;font-size:13px;line-height:13px;color:#222;font-weight:normal;font-family:'Liberation Sans',sans-serif;width:21px;text-align:center">13</div>
<div class="t" style="left:0px;top:450.50px;font-size:13px;line-height:13px;color:#222;font-weight:normal;font-family:'Liberation Sans',sans-serif;width:21px;text-align:center">14</div>
<div class="t" style="left:0px;top:470.50px;font-size:13px;line-height:13px;color:#222;font-weight:normal;font-family:'Liberation Sans',sans-serif;width:21px;text-align:center">15</div>
<div class="t" style="left:0px;top:490.50px;font-size:13px;line-height:13px;color:#222;font-weight:normal;font-family:'Liberation Sans',sans-serif;width:21px;text-align:center">16</div>
<div class="t" style="left:0px;top:510.50px;font-size:13px;line-height:13px;color:#222;font-weight:normal;font-family:'Liberation Sans',sans-serif;width:21px;text-align:center">17</div>
<div class="t" style="left:0px;top:530.50px;font-size:13px;line-height:13px;color:#222;font-weight:normal;font-family:'Liberation Sans',sans-serif;width:21px;text-align:center">18</div>
<div class="t" style="left:0px;top:550.50px;font-size:13px;line-height:13px;color:#222;font-weight:normal;font-family:'Liberation Sans',sans-serif;width:21px;text-align:center">19</div>
<div class="t" style="left:0px;top:570.50px;font-size:13px;line-height:13px;color:#222;font-weight:normal;font-family:'Liberation Sans',sans-serif;width:21px;text-align:center">20</div>
<div class="t" style="left:0px;top:590.50px;font-size:13px;line-height:13px;color:#222;font-weight:normal;font-family:'Liberation Sans',sans-serif;width:21px;text-align:center">21</div>
<div class="t" style="left:0px;top:610.50px;font-size:13px;line-height:13px;color:#222;font-weight:normal;font-family:'Liberation Sans',sans-serif;width:21px;text-align:center">22</div>
<div class="t" style="left:0px;top:630.50px;font-size:13px;line-height:13px;color:#222;font-weight:normal;font-family:'Liberation Sans',sans-serif;width:21px;text-align:center">23</div>
<div class="t" style="left:0px;top:650.50px;font-size:13px;line-height:13px;color:#222;font-weight:normal;font-family:'Liberation Sans',sans-serif;width:21px;text-align:center">24</div>
<div class="t" style="left:0px;top:670.50px;font-size:13px;line-height:13px;color:#222;font-weight:normal;font-family:'Liberation Sans',sans-serif;width:21px;text-align:center">25</div>
<div class="t" style="left:0px;top:690.50px;font-size:13px;line-height:13px;color:#222;font-weight:normal;font-family:'Liberation Sans',sans-serif;width:21px;text-align:center">26</div>
<div class="t" style="left:0px;top:710.50px;font-size:13px;line-height:13px;color:#222;font-weight:normal;font-family:'Liberation Sans',sans-serif;width:21px;text-align:center">27</div>
<div class="t" style="left:0px;top:730.50px;font-size:13px;line-height:13px;color:#222;font-weight:normal;font-family:'Liberation Sans',sans-serif;width:21px;text-align:center">28</div>
<div class="t" style="left:0px;top:750.50px;font-size:13px;line-height:13px;color:#222;font-weight:normal;font-family:'Liberation Sans',sans-serif;width:21px;text-align:center">29</div>
<div class="t" style="left:154px;top:230.77px;font-size:13.5px;line-height:13.5px;color:#000;font-weight:normal;font-family:'Liberation Sans',sans-serif;">Chocolates</div>
<div class="t" style="left:346px;top:230.77px;font-size:13.5px;line-height:13.5px;color:#006100;font-weight:normal;font-family:'Liberation Sans',sans-serif;">This is chocolate</div>
<div class="t" style="left:154px;top:250.77px;font-size:13.5px;line-height:13.5px;color:#000;font-weight:normal;font-family:'Liberation Sans',sans-serif;">Apples</div>
<div class="t" style="left:346px;top:250.77px;font-size:13.5px;line-height:13.5px;color:#9c0006;font-weight:normal;font-family:'Liberation Sans',sans-serif;">This is not a chocolate</div>
<div class="t" style="left:154px;top:270.77px;font-size:13.5px;line-height:13.5px;color:#000;font-weight:normal;font-family:'Liberation Sans',sans-serif;">Oranges</div>
<div class="t" style="left:346px;top:270.77px;font-size:13.5px;line-height:13.5px;color:#9c0006;font-weight:normal;font-family:'Liberation Sans',sans-serif;">This is not a chocolate</div>
<div class="t" style="left:154px;top:290.77px;font-size:13.5px;line-height:13.5px;color:#000;font-weight:normal;font-family:'Liberation Sans',sans-serif;">Banana</div>
<div class="t" style="left:346px;top:290.77px;font-size:13.5px;line-height:13.5px;color:#9c0006;font-weight:normal;font-family:'Liberation Sans',sans-serif;">This is not a chocolate</div>
<div class="t" style="left:154px;top:310.77px;font-size:13.5px;line-height:13.5px;color:#000;font-weight:normal;font-family:'Liberation Sans',sans-serif;">Chocolates</div>
<div class="t" style="left:346px;top:310.77px;font-size:13.5px;line-height:13.5px;color:#006100;font-weight:normal;font-family:'Liberation Sans',sans-serif;">This is chocolate</div>
<div class="t" style="left:154px;top:330.77px;font-size:13.5px;line-height:13.5px;color:#000;font-weight:normal;font-family:'Liberation Sans',sans-serif;">Apples</div>
<div class="t" style="left:346px;top:330.77px;font-size:13.5px;line-height:13.5px;color:#9c0006;font-weight:normal;font-family:'Liberation Sans',sans-serif;">This is not a chocolate</div>
<div class="t" style="left:154px;top:350.77px;font-size:13.5px;line-height:13.5px;color:#000;font-weight:normal;font-family:'Liberation Sans',sans-serif;">Oranges</div>
<div class="t" style="left:346px;top:350.77px;font-size:13.5px;line-height:13.5px;color:#9c0006;font-weight:normal;font-family:'Liberation Sans',sans-serif;">This is not a chocolate</div>
<div class="t" style="left:154px;top:370.77px;font-size:13.5px;line-height:13.5px;color:#000;font-weight:normal;font-family:'Liberation Sans',sans-serif;">Banana</div>
<div class="t" style="left:346px;top:370.77px;font-size:13.5px;line-height:13.5px;color:#9c0006;font-weight:normal;font-family:'Liberation Sans',sans-serif;">This is not a chocolate</div>
<div class="t" style="left:154px;top:390.77px;font-size:13.5px;line-height:13.5px;color:#000;font-weight:normal;font-family:'Liberation Sans',sans-serif;">Chocolates</div>
<div class="t" style="left:346px;top:390.77px;font-size:13.5px;line-height:13.5px;color:#006100;font-weight:normal;font-family:'Liberation Sans',sans-serif;">This is chocolate</div>
<div class="t" style="left:154px;top:410.77px;font-size:13.5px;line-height:13.5px;color:#000;font-weight:normal;font-family:'Liberation Sans',sans-serif;">Apples</div>
<div class="t" style="left:346px;top:410.77px;font-size:13.5px;line-height:13.5px;color:#9c0006;font-weight:normal;font-family:'Liberation Sans',sans-serif;">This is not a chocolate</div>
<div class="t" style="left:154px;top:430.77px;font-size:13.5px;line-height:13.5px;color:#000;font-weight:normal;font-family:'Liberation Sans',sans-serif;">Oranges</div>
<div class="t" style="left:346px;top:430.77px;font-size:13.5px;line-height:13.5px;color:#9c0006;font-weight:normal;font-family:'Liberation Sans',sans-serif;">This is not a chocolate</div>
<div class="t" style="left:154px;top:450.77px;font-size:13.5px;line-height:13.5px;color:#000;font-weight:normal;font-family:'Liberation Sans',sans-serif;">Banana</div>
<div class="t" style="left:346px;top:450.77px;font-size:13.5px;line-height:13.5px;color:#9c0006;font-weight:normal;font-family:'Liberation Sans',sans-serif;">This is not a chocolate</div>
<div class="r" style="left:342px;top:225px;width:462px;height:23px;background:transparent;border:2px solid #217346;box-sizing:border-box;box-shadow:inset 0 0 0 1px #fff"></div>
<div class="r" style="left:771px;top:101px;width:183px;height:298px;background:#fff;border:1px solid #c6c6c6;box-sizing:border-box;box-shadow:2px 2px 4px rgba(0,0,0,0.18)"></div>
<div class="r" style="left:773px;top:102px;width:180px;height:44px;background:#9fd5b7;"></div>
<div class="r" style="left:817px;top:190px;width:136px;height:1px;background:#e1e1e1;"></div>
<div class="r" style="left:773px;top:324px;width:180px;height:1px;background:#e1e1e1;"></div>
<div class="r" style="left:953px;top:102px;width:183px;height:338px;background:#fff;border:1px solid #c6c6c6;box-sizing:border-box;box-shadow:2px 2px 4px rgba(0,0,0,0.18)"></div>
<div class="r" style="left:955px;top:236px;width:179px;height:44px;background:#9fd5b7;"></div>
<div class="r" style="left:955px;top:412px;width:179px;height:1px;background:#e1e1e1;"></div>
<div class="t" style="left:818.7px;top:118.57px;font-size:11.5px;line-height:11.5px;color:#333;font-weight:bold;font-family:'Liberation Sans',sans-serif;"><u>H</u>ighlight Cells Rules</div>
<div class="t" style="left:818.7px;top:162.47px;font-size:11.5px;line-height:11.5px;color:#444;font-weight:bold;font-family:'Liberation Sans',sans-serif;"><u>T</u>op/Bottom Rules</div>
<div class="t" style="left:818.7px;top:208.57px;font-size:11.5px;line-height:11.5px;color:#444;font-weight:bold;font-family:'Liberation Sans',sans-serif;"><u>D</u>ata Bars</div>
<div class="t" style="left:818.7px;top:252.47px;font-size:11.5px;line-height:11.5px;color:#444;font-weight:bold;font-family:'Liberation Sans',sans-serif;">Color <u>S</u>cales</div>
<div class="t" style="left:818.7px;top:296.47px;font-size:11.5px;line-height:11.5px;color:#444;font-weight:bold;font-family:'Liberation Sans',sans-serif;"><u>I</u>con Sets</div>
<div class="t" style="left:804.7px;top:332.47px;font-size:11.5px;line-height:11.5px;color:#555;font-weight:normal;font-family:'Liberation Sans',sans-serif;"><u>N</u>ew Rule...</div>
<div class="t" style="left:804.7px;top:356.47px;font-size:11.5px;line-height:11.5px;color:#555;font-weight:normal;font-family:'Liberation Sans',sans-serif;"><u>C</u>lear Rules</div>
<div class="t" style="left:804.7px;top:380.57px;font-size:11.5px;line-height:11.5px;color:#555;font-weight:normal;font-family:'Liberation Sans',sans-serif;">Manage <u>R</u>ules...</div>
<div class="t" style="left:1000.2px;top:120.57px;font-size:11.5px;line-height:11.5px;color:#444;font-weight:bold;font-family:'Liberation Sans',sans-serif;"><u>G</u>reater Than...</div>
<div class="t" style="left:1000.2px;top:164.47px;font-size:11.5px;line-height:11.5px;color:#444;font-weight:bold;font-family:'Liberation Sans',sans-serif;"><u>L</u>ess Than...</div>
<div class="t" style="left:1000.2px;top:208.77px;font-size:11.5px;line-height:11.5px;color:#444;font-weight:bold;font-family:'Liberation Sans',sans-serif;"><u>B</u>etween...</div>
<div class="t" style="left:1000.2px;top:252.37px;font-size:11.5px;line-height:11.5px;color:#333;font-weight:bold;font-family:'Liberation Sans',sans-serif;"><u>E</u>qual To...</div>
<div class="t" style="left:1000.2px;top:297.27px;font-size:11.5px;line-height:11.5px;color:#444;font-weight:bold;font-family:'Liberation Sans',sans-serif;"><u>T</u>ext that Contains...</div>
<div class="t" style="left:1000.2px;top:341.27px;font-size:11.5px;line-height:11.5px;color:#444;font-weight:bold;font-family:'Liberation Sans',sans-serif;"><u>A</u> Date Occurring...</div>
<div class="t" style="left:1000.2px;top:385.27px;font-size:11.5px;line-height:11.5px;color:#444;font-weight:bold;font-family:'Liberation Sans',sans-serif;"><u>D</u>uplicate Values...</div>
<div class="t" style="left:986.2px;top:420.77px;font-size:11.5px;line-height:11.5px;color:#555;font-weight:normal;font-family:'Liberation Sans',sans-serif;"><u>M</u>ore Rules...</div>
<svg class="r" style="left:0;top:0" width="1148" height="450" viewBox="0 0 1148 450"><rect x="781.5" y="110.5" width="27.5" height="24" fill="#fff"/><rect x="788.0" y="110.5" width="1" height="24" fill="#a8a8a8"/><rect x="801.5" y="110.5" width="1" height="24" fill="#a8a8a8"/><rect x="781.5" y="116.0" width="27.5" height="1" fill="#a8a8a8"/><rect x="781.5" y="122.0" width="27.5" height="1" fill="#a8a8a8"/><rect x="781.5" y="128.0" width="27.5" height="1" fill="#a8a8a8"/><rect x="781.5" y="110.5" width="27.5" height="24" fill="none" stroke="#707070" stroke-width="1.1"/><rect x="788.5" y="116.5" width="13.5" height="6" fill="#edc67c"/><rect x="794.5" y="126.5" width="17" height="14" fill="#9fd5b7"/><rect x="795.5" y="127.5" width="15" height="12" fill="#fff" stroke="#707070" stroke-width="1.1"/><path d="M802 129.8l-3 1.6 3 1.6M798 135.5h4M798 137.3h4M804.5 132.5l3.3 2.2-3.3 2.2" stroke="#222" stroke-width="0.9" fill="none"/><rect x="781.5" y="154.5" width="27.5" height="24" fill="#fff"/><rect x="788.5" y="154.5" width="13.5" height="6" fill="#edc67c"/><rect x="788.5" y="160.5" width="13.5" height="6" fill="#edc67c"/><rect x="788.5" y="166.5" width="13.5" height="6" fill="#edc67c"/><rect x="788.0" y="154.5" width="1" height="24" fill="#a8a8a8"/><rect x="801.5" y="154.5" width="1" height="24" fill="#a8a8a8"/><rect x="781.5" y="160.0" width="27.5" height="1" fill="#a8a8a8"/><rect x="781.5" y="166.0" width="27.5" height="1" fill="#a8a8a8"/><rect x="781.5" y="172.0" width="27.5" height="1" fill="#a8a8a8"/><rect x="781.5" y="154.5" width="27.5" height="24" fill="none" stroke="#707070" stroke-width="1.1"/><path d="M794.5 168.5v-11M791.5 160.5l3-3.2 3 3.2" stroke="#555" stroke-width="1.1" fill="none"/><rect x="794.5" y="170.5" width="17" height="14" fill="#fff"/><rect x="795.5" y="171.5" width="15" height="12" fill="#fff" stroke="#707070" stroke-width="1.1"/><text x="797.5" y="181.5" font-family="Liberation Serif" font-size="10" fill="#333">10</text><rect x="781.5" y="201.5" width="27.5" height="25" fill="#fff"/><rect x="787.5" y="201.5" width="1" height="25" fill="#a8a8a8"/><rect x="802.0" y="201.5" width="1" height="25" fill="#a8a8a8"/><rect x="781.5" y="206.0" width="27.5" height="1" fill="#a8a8a8"/><rect x="781.5" y="211.0" width="27.5" height="1" fill="#a8a8a8"/><rect x="781.5" y="216.0" width="27.5" height="1" fill="#a8a8a8"/><rect x="781.5" y="221.0" width="27.5" height="1" fill="#a8a8a8"/><rect x="781.5" y="201.5" width="27.5" height="25" fill="none" stroke="#707070" stroke-width="1.1"/><rect x="788.2" y="202.3" width="9" height="4.4" fill="#4a80c0"/><rect x="798.2" y="203.6" width="2.6" height="1" fill="#555"/><rect x="788.2" y="207.3" width="3" height="4.4" fill="#4a80c0"/><rect x="798.2" y="208.6" width="2.6" height="1" fill="#555"/><rect x="788.2" y="212.3" width="6" height="4.4" fill="#4a80c0"/><rect x="798.2" y="213.6" width="2.6" height="1" fill="#555"/><rect x="788.2" y="217.3" width="8" height="4.4" fill="#4a80c0"/><rect x="798.2" y="218.6" width="2.6" height="1" fill="#555"/><rect x="788.2" y="222.3" width="6" height="4.4" fill="#4a80c0"/><rect x="798.2" y="223.6" width="2.6" height="1" fill="#555"/><rect x="781.5" y="245.5" width="27.5" height="25" fill="#fff"/><rect x="787.5" y="245.5" width="1" height="25" fill="#a8a8a8"/><rect x="802.0" y="245.5" width="1" height="25" fill="#a8a8a8"/><rect x="781.5" y="250.0" width="27.5" height="1" fill="#a8a8a8"/><rect x="781.5" y="255.0" width="27.5" height="1" fill="#a8a8a8"/><rect x="781.5" y="260.0" width="27.5" height="1" fill="#a8a8a8"/><rect x="781.5" y="265.0" width="27.5" height="1" fill="#a8a8a8"/><rect x="781.5" y="245.5" width="27.5" height="25" fill="none" stroke="#707070" stroke-width="1.1"/><rect x="788.2" y="246.3" width="13.6" height="4.4" fill="#4a7fc1"/><rect x="795" y="249" width="5.8" height="1" fill="#444"/><rect x="788.2" y="251.3" width="13.6" height="4.4" fill="#6faa91"/><rect x="795" y="254" width="5.8" height="1" fill="#444"/><rect x="788.2" y="256.3" width="13.6" height="4.4" fill="#f3ca7b"/><rect x="795" y="259" width="5.8" height="1" fill="#444"/><rect x="788.2" y="261.3" width="13.6" height="4.4" fill="#ec8b3b"/><rect x="795" y="264" width="5.8" height="1" fill="#444"/><rect x="788.2" y="266.3" width="13.6" height="4.4" fill="#e05e3a"/><rect x="795" y="269" width="5.8" height="1" fill="#444"/><rect x="781.5" y="289.5" width="27.5" height="25" fill="#fff"/><rect x="787.5" y="289.5" width="1" height="25" fill="#a8a8a8"/><rect x="802.0" y="289.5" width="1" height="25" fill="#a8a8a8"/><rect x="781.5" y="294.0" width="27.5" height="1" fill="#a8a8a8"/><rect x="781.5" y="299.0" width="27.5" height="1" fill="#a8a8a8"/><rect x="781.5" y="304.0" width="27.5" height="1" fill="#a8a8a8"/><rect x="781.5" y="309.0" width="27.5" height="1" fill="#a8a8a8"/><rect x="781.5" y="289.5" width="27.5" height="25" fill="none" stroke="#707070" stroke-width="1.1"/><circle cx="791" cy="292.2" r="1.3" fill="#4f9a7c"/><rect x="795" y="291.7" width="5.8" height="1" fill="#666"/><circle cx="791" cy="297.2" r="1.3" fill="#e36c0a"/><rect x="795" y="296.7" width="5.8" height="1" fill="#666"/><circle cx="791" cy="302.2" r="1.3" fill="#4f9a7c"/><rect x="795" y="301.7" width="5.8" height="1" fill="#666"/><circle cx="791" cy="307.2" r="1.3" fill="#e36c0a"/><rect x="795" y="306.7" width="5.8" height="1" fill="#666"/><circle cx="791" cy="312.2" r="1.3" fill="#4f9a7c"/><rect x="795" y="311.7" width="5.8" height="1" fill="#666"/><rect x="778.5" y="331.5" width="12.5" height="12.5" fill="#fff"/><path d="M778.5 335.0h12.5M778.5 338.0h12.5M778.5 341.0h12.5M782.5 331.5v12.5M787.0 331.5v12.5" stroke="#c4c4c4" stroke-width="0.9"/><rect x="782.0" y="334.5" width="5.5" height="4" fill="#edc67c"/><rect x="778.5" y="331.5" width="12.5" height="12.5" fill="none" stroke="#707070" stroke-width="1"/><rect x="778.5" y="355.5" width="12.5" height="12.5" fill="#fff"/><path d="M778.5 359.0h12.5M778.5 362.0h12.5M778.5 365.0h12.5M782.5 355.5v12.5M787.0 355.5v12.5" stroke="#c4c4c4" stroke-width="0.9"/><rect x="782.0" y="358.5" width="5.5" height="4" fill="#edc67c"/><path d="M778.5 368.0v-12.5h12.5v5" stroke="#707070" stroke-width="1" fill="none"/><path d="M778.5 368.0h6" stroke="#707070" stroke-width="1"/><path d="M785.3 366.8l6-6.8 3.2 2.8-6 6.8z" fill="#e0708a" stroke="#fff" stroke-width="0.7"/><path d="M785.3 366.8l1.6-1.8 3.2 2.8-1.6 1.8z" fill="#f4b6c4"/><path d="M777.5 390.5v-12h10.5" stroke="#6d6d6d" stroke-width="1" fill="none"/><rect x="779.5" y="380.5" width="12.5" height="12.5" fill="#fff"/><path d="M779.5 384.0h12.5M779.5 387.0h12.5M779.5 390.0h12.5M783.5 380.5v12.5M788.0 380.5v12.5" stroke="#c4c4c4" stroke-width="0.9"/><rect x="783.0" y="383.5" width="5.5" height="4" fill="#edc67c"/><rect x="779.5" y="380.5" width="12.5" height="12.5" fill="none" stroke="#707070" stroke-width="1"/><path d="M940 119.7l3.8 3.8-3.8 3.8z" fill="#666"/><path d="M940 163.7l3.8 3.8-3.8 3.8z" fill="#666"/><path d="M940 209.6l3.8 3.8-3.8 3.8z" fill="#666"/><path d="M940 253.59999999999997l3.8 3.8-3.8 3.8z" fill="#666"/><path d="M940 297.59999999999997l3.8 3.8-3.8 3.8z" fill="#666"/><path d="M940 357.59999999999997l3.8 3.8-3.8 3.8z" fill="#666"/><rect x="963.5" y="113.5" width="27.5" height="24" fill="#fff"/><rect x="970.0" y="113.5" width="1" height="24" fill="#a8a8a8"/><rect x="983.5" y="113.5" width="1" height="24" fill="#a8a8a8"/><rect x="963.5" y="119.0" width="27.5" height="1" fill="#a8a8a8"/><rect x="963.5" y="125.0" width="27.5" height="1" fill="#a8a8a8"/><rect x="963.5" y="131.0" width="27.5" height="1" fill="#a8a8a8"/><rect x="963.5" y="113.5" width="27.5" height="24" fill="none" stroke="#707070" stroke-width="1.1"/><rect x="970.5" y="119.5" width="13.5" height="6" fill="#edc67c"/><rect x="976.5" y="128.5" width="17" height="14" fill="#fff"/><rect x="977.5" y="129.5" width="15" height="12" fill="#fff" stroke="#707070" stroke-width="1.1"/><path d="M982.5 132.5l4.5 3-4.5 3" stroke="#222" stroke-width="1" fill="none"/><rect x="963.5" y="157.5" width="27.5" height="24" fill="#fff"/><rect x="970.0" y="157.5" width="1" height="24" fill="#a8a8a8"/><rect x="983.5" y="157.5" width="1" height="24" fill="#a8a8a8"/><rect x="963.5" y="163.0" width="27.5" height="1" fill="#a8a8a8"/><rect x="963.5" y="169.0" width="27.5" height="1" fill="#a8a8a8"/><rect x="963.5" y="175.0" width="27.5" height="1" fill="#a8a8a8"/><rect x="963.5" y="157.5" width="27.5" height="24" fill="none" stroke="#707070" stroke-width="1.1"/><rect x="970.5" y="163.5" width="13.5" height="6" fill="#edc67c"/><rect x="976.5" y="172.5" width="17" height="14" fill="#fff"/><rect x="977.5" y="173.5" width="15" height="12" fill="#fff" stroke="#707070" stroke-width="1.1"/><path d="M987 176.5l-4.5 3 4.5 3" stroke="#222" stroke-width="1" fill="none"/><rect x="963.5" y="201.5" width="27.5" height="24" fill="#fff"/><rect x="963.5" y="207.5" width="7" height="6" fill="#4a80c0"/><rect x="984.0" y="207.5" width="7" height="6" fill="#4a80c0"/><rect x="970.5" y="213.5" width="13.5" height="6" fill="#edc67c"/><rect x="970.0" y="201.5" width="1" height="24" fill="#a8a8a8"/><rect x="983.5" y="201.5" width="1" height="24" fill="#a8a8a8"/><rect x="963.5" y="207.0" width="27.5" height="1" fill="#a8a8a8"/><rect x="963.5" y="213.0" width="27.5" height="1" fill="#a8a8a8"/><rect x="963.5" y="219.0" width="27.5" height="1" fill="#a8a8a8"/><rect x="963.5" y="201.5" width="27.5" height="24" fill="none" stroke="#707070" stroke-width="1.1"/><rect x="963.5" y="245.5" width="27.5" height="24" fill="#fff"/><rect x="970.0" y="245.5" width="1" height="24" fill="#a8a8a8"/><rect x="983.5" y="245.5" width="1" height="24" fill="#a8a8a8"/><rect x="963.5" y="251.0" width="27.5" height="1" fill="#a8a8a8"/><rect x="963.5" y="257.0" width="27.5" height="1" fill="#a8a8a8"/><rect x="963.5" y="263.0" width="27.5" height="1" fill="#a8a8a8"/><rect x="963.5" y="245.5" width="27.5" height="24" fill="none" stroke="#707070" stroke-width="1.1"/><rect x="970.5" y="251.5" width="13.5" height="6" fill="#edc67c"/><rect x="976.5" y="260.5" width="17" height="14" fill="#9fd5b7"/><rect x="977.5" y="261.5" width="15" height="12" fill="#fff" stroke="#707070" stroke-width="1.1"/><path d="M981 266.5h7M981 269.5h7" stroke="#222" stroke-width="1"/><rect x="963.5" y="289.5" width="27.5" height="24" fill="#fff"/><rect x="970.0" y="289.5" width="1" height="24" fill="#a8a8a8"/><rect x="983.5" y="289.5" width="1" height="24" fill="#a8a8a8"/><rect x="963.5" y="295.0" width="27.5" height="1" fill="#a8a8a8"/><rect x="963.5" y="301.0" width="27.5" height="1" fill="#a8a8a8"/><rect x="963.5" y="307.0" width="27.5" height="1" fill="#a8a8a8"/><rect x="963.5" y="289.5" width="27.5" height="24" fill="none" stroke="#707070" stroke-width="1.1"/><rect x="970.5" y="295.5" width="13.5" height="6" fill="#edc67c"/><rect x="976.5" y="304.5" width="17" height="14" fill="#fff"/><rect x="977.5" y="305.5" width="15" height="12" fill="#fff" stroke="#707070" stroke-width="1.1"/><text x="978.6" y="315.8" font-family="Liberation Serif" font-size="11" fill="#333">ab</text><rect x="963.5" y="333.5" width="26.5" height="25" fill="#fff"/><rect x="969.5" y="333.5" width="1" height="25" fill="#a8a8a8"/><rect x="983.5" y="333.5" width="1" height="25" fill="#a8a8a8"/><rect x="963.5" y="338.0" width="26.5" height="1" fill="#a8a8a8"/><rect x="963.5" y="343.0" width="26.5" height="1" fill="#a8a8a8"/><rect x="963.5" y="348.0" width="26.5" height="1" fill="#a8a8a8"/><rect x="963.5" y="353.0" width="26.5" height="1" fill="#a8a8a8"/><rect x="963.5" y="333.5" width="26.5" height="25" fill="none" stroke="#707070" stroke-width="1.1"/><rect x="969.8" y="343.8" width="14" height="4.8" fill="#edc67c"/><rect x="976.5" y="346.5" width="17" height="16" fill="#fff"/><rect x="977.5" y="347.5" width="15" height="14" fill="#fff" stroke="#707070" stroke-width="1.1"/><rect x="977.5" y="347.5" width="15" height="3" fill="#6d6d6d"/><path d="M977.5 353.5h15M977.5 356.5h15M977.5 359.5h15M981.5 350.5v11M985.5 350.5v11M989.5 350.5v11" stroke="#b0b0b0" stroke-width="0.8"/><rect x="986.5" y="352.5" width="3" height="3" fill="#fff" stroke="#e36c0a" stroke-width="1.2"/><rect x="963.5" y="377.5" width="27.5" height="24" fill="#fff"/><rect x="970.5" y="383.5" width="13.5" height="6" fill="#edc67c"/><rect x="970.5" y="395.5" width="13.5" height="6" fill="#edc67c"/><rect x="970.0" y="377.5" width="1" height="24" fill="#a8a8a8"/><rect x="983.5" y="377.5" width="1" height="24" fill="#a8a8a8"/><rect x="963.5" y="383.0" width="27.5" height="1" fill="#a8a8a8"/><rect x="963.5" y="389.0" width="27.5" height="1" fill="#a8a8a8"/><rect x="963.5" y="395.0" width="27.5" height="1" fill="#a8a8a8"/><rect x="963.5" y="377.5" width="27.5" height="24" fill="none" stroke="#707070" stroke-width="1.1"/><rect x="972.2" y="380.3" width="6.8" height="1" fill="#a0a0a0"/><rect x="972.2" y="386.3" width="6.8" height="1" fill="#a0a0a0"/><rect x="972.2" y="392.3" width="6.8" height="1" fill="#a0a0a0"/><rect x="972.2" y="398.3" width="6.8" height="1" fill="#a0a0a0"/></svg>
<div class="r" style="left:209px;top:524px;width:500px;height:152px;overflow:hidden;background:rgba(0,0,0,0.045)"><div style="position:absolute;left:10px;top:1px;width:471px;height:133px;border-radius:7px;box-shadow:0 7px 16px rgba(0,0,0,0.22)"></div></div>
<div class="r" style="left:219px;top:525px;width:471px;height:133px;background:#f0f0f0;border:1px solid #aaaaaa;box-sizing:border-box;border-radius:7px;overflow:hidden"><div style="position:absolute;left:0;top:0;right:0;height:30px;background:#fff"></div></div>
<div class="t" style="left:228.3px;top:536.07px;font-size:11.5px;line-height:11.5px;color:#9a9a9a;font-weight:normal;font-family:'Liberation Sans',sans-serif;">Equal To</div>
<div class="t" style="left:619.3px;top:535.07px;font-size:11.5px;line-height:11.5px;color:#888;font-weight:normal;font-family:'Liberation Sans',sans-serif;">?</div>
<svg class="r" style="left:661px;top:535px" width="12" height="12" viewBox="0 0 12 12"><path d="M1 1l10 10M11 1l-10 10" stroke="#666" stroke-width="0.9"/></svg>
<div class="t" style="left:227.6px;top:565.41px;font-size:10.5px;line-height:10.5px;color:#000;font-weight:bold;font-family:'Liberation Sans',sans-serif;letter-spacing:0px">Format cells that are EQUAL TO:</div>
<div class="r" style="left:226px;top:591px;width:217px;height:21px;background:#fff;border:1px solid #a9a9a9;box-sizing:border-box"></div>
<div class="t" style="left:230.1px;top:596.97px;font-size:11.5px;line-height:11.5px;color:#000;font-weight:normal;font-family:'Liberation Sans',sans-serif;">This is not a chocolate</div>
<div class="r" style="left:421px;top:592px;width:21px;height:19px;background:#fff;border:1px solid #d0d0d0;box-sizing:border-box;border-radius:3px"></div>
<svg class="r" style="left:424px;top:595px" width="15" height="13" viewBox="0 0 15 13"><rect x="0" y="0" width="15" height="13" fill="#dfe9f7"/><rect x="0" y="0" width="15" height="2" fill="#2f5fb3"/><path d="M0 4.5h15M0 7.5h15M0 10.5h15M5 2v11M10 2v11" stroke="#3d63a6" stroke-width="1"/><rect x="0" y="12" width="15" height="1" fill="#3d63a6"/><rect x="0" y="3" width="5" height="2" fill="#1f2d4a"/><path d="M5.5 4.5l6 2-2.2 1.2 2.8 2.8-1.4 1.4-2.8-2.8-1.2 2.2z" fill="#d62b1e"/></svg>
<div class="t" style="left:453.4px;top:596.67px;font-size:11.5px;line-height:11.5px;color:#000;font-weight:normal;font-family:'Liberation Sans',sans-serif;">with</div>
<div class="r" style="left:486px;top:591px;width:198px;height:21px;background:#fff;border:1px solid #a9a9a9;box-sizing:border-box"></div>
<div class="t" style="left:490px;top:596.17px;font-size:11.5px;line-height:11.5px;color:#000;font-weight:normal;font-family:'Liberation Sans',sans-serif;">Light Red Fill with Dark Red Text</div>
<div class="r" style="left:665px;top:593px;width:17px;height:17px;background:#fff;border:1px solid #c6c6c6;box-sizing:border-box;border-radius:2px"></div>
<svg class="r" style="left:668px;top:599px" width="11" height="6" viewBox="0 0 11 6"><path d="M1 1l4.5 4 4.5-4" stroke="#444" stroke-width="1" fill="none"/></svg>
<div class="r" style="left:526px;top:628px;width:73px;height:21px;background:#fdfdfd;border:1px solid #d0d0d0;box-sizing:border-box;border-radius:4px"></div>
<div class="r" style="left:610px;top:628px;width:73px;height:21px;background:#fdfdfd;border:1px solid #d0d0d0;box-sizing:border-box;border-radius:4px"></div>
<div class="t" style="left:555.4px;top:634.47px;font-size:11.5px;line-height:11.5px;color:#000;font-weight:normal;font-family:'Liberation Sans',sans-serif;">OK</div>
<div class="t" style="left:629.5px;top:634.89px;font-size:11px;line-height:11px;color:#000;font-weight:normal;font-family:'Liberation Sans',sans-serif;">Cancel</div>
</body></html>
